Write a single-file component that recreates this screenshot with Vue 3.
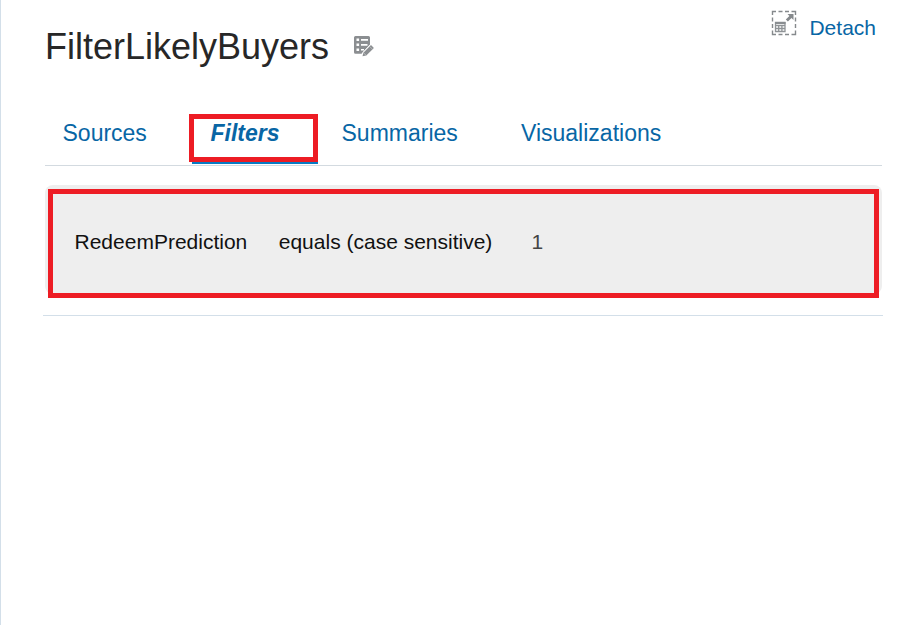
<script setup>
const tabs = [
  { label: 'Sources', cls: 'sources' },
  { label: 'Filters', cls: 'filters', active: true },
  { label: 'Summaries', cls: 'summaries' },
  { label: 'Visualizations', cls: 'visualizations' }
]
</script>

<template>
  <main class="page">
    <header class="header">
      <h1 class="title">FilterLikelyBuyers</h1>
      <svg class="edit-icon" width="21" height="22" viewBox="0 0 21 22">
        <path d="M1.500 1H14.500A1.500 1.500 0 0 1 16 2.500V9.500L7.500 18.700H1.500A1.500 1.500 0 0 1 0 17.200V2.500A1.500 1.500 0 0 1 1.500 1Z" fill="#8b8e91" />
        <path d="M2.500 3.500h2.600v2.400H2.500zM2.500 8.500h2.600v2.400H2.500zM2.500 13.500h2.600v2.400H2.500zM7 4h7v1.800H7zM7 9h6.500v1.700H7zM7 14h3v1.600H7z" fill="#fff" />
        <path d="M8.500 21.300 9.400 17.700 17 10.100 19.900 13 12.300 20.500Z" fill="#8b8e91" stroke="#fff" stroke-width="1.600" paint-order="stroke" />
        <path d="m15.600 11.400 2.900 2.900M9.400 17.700l2.900 2.800" stroke="#d4d6d7" stroke-width=".6" />
      </svg>
      <a class="detach">
        <svg class="detach-icon" width="26" height="26" viewBox="0 0 26 26">
          <path d="M1.500 5V1.500H5M7.500 1.500H11.500M14 1.500H18M20.500 1.500H24.500V5M24.500 7.500V11.500M24.500 14V18M24.500 20.500V24.500H20.500M18 24.500H14M11.500 24.500H7.500M5 24.500H1.500V20.500M1.500 18V14M1.500 11.500V7.500" fill="none" stroke="#85898c" stroke-width="1.400" />
          <path d="M4.500 12.500h9.500v9h-9.500zM4.500 15.500h9.500M7.700 15.500v6M10.900 15.500v6M4.500 18.500h9.500" fill="none" stroke="#8f9396" stroke-width="1.300" />
          <path d="M4 12h10.500v2H4z" fill="#898d90" />
          <path d="M16.500 4h6v6l-2-2-3.600 3.600-2.100-2.100 3.600-3.600z" fill="#85898c" />
        </svg>
        <span>Detach</span>
      </a>
    </header>

    <nav class="tabs">
      <a v-for="tab in tabs" :key="tab.label" class="tab" :class="[tab.cls, { active: tab.active }]">
        {{ tab.label }}
        <i v-if="tab.active" class="tab-highlight"></i>
      </a>
    </nav>

    <section class="filter-list">
      <div class="filter-row">
        <span class="column">RedeemPrediction</span>
        <span class="operator">equals (case sensitive)</span>
        <span class="value">1</span>
        <i class="row-highlight"></i>
      </div>
    </section>
  </main>
</template>

<style>
body { background: #fff; }
</style>

<style scoped>
.page {
  box-sizing: border-box;
  height: 625px;
  border-left: 1px solid #d3dfe9;
  padding: 0 20px 0 42px;
  font-family: "Liberation Sans", Arial, sans-serif;
}
.header {
  display: flex;
  align-items: flex-start;
  height: 102px;
  padding-left: 2px;
}
.title {
  margin: 26px 0 0;
  font-size: 36px;
  line-height: 42px;
  font-weight: 400;
  color: #272727;
}
.edit-icon { margin: 35px 0 0 25px; }
.detach {
  display: flex;
  align-items: flex-start;
  margin: 10px 7px 0 auto;
  gap: 12px;
  color: #0866a5;
  font-size: 21px;
  line-height: 24px;
}
.detach span { margin-top: 6px; }
.tabs {
  box-sizing: border-box;
  display: flex;
  height: 64px;
  margin: 0 1px 0 2px;
  border-bottom: 1px solid #d3dae0;
}
.tab {
  box-sizing: border-box;
  height: 62px;
  padding-top: 18px;
  font-size: 23px;
  line-height: 26px;
  color: #0866a5;
  white-space: nowrap;
}
.sources { width: 147px; padding-left: 17.500px; }
.summaries { width: 179px; padding-left: 23.500px; }
.visualizations { padding-left: 24px; }
.filters { width: 126px; padding-left: 18.500px; }
.active {
  position: relative;
  border-bottom: 4px solid #087bc4;
  font-weight: 700;
  font-style: italic;
}
.tab-highlight {
  position: absolute;
  box-sizing: border-box;
  left: -3px;
  top: 12px;
  width: 129px;
  height: 48px;
  border: 5px solid #ed1c24;
}
.filter-list {
  box-sizing: border-box;
  height: 150px;
  padding: 19px 1px 0 2px;
  border-bottom: 1px solid #d3dfe9;
}
.filter-row {
  position: relative;
  display: flex;
  align-items: center;
  height: 109px;
  padding: 4px 0 0 29.500px;
  box-sizing: border-box;
  border-radius: 8px;
  background: #eee;
  color: #111;
  font-size: 21px;
  line-height: 24px;
}
.operator { margin-left: 31.500px; }
.value { margin-left: 39px; color: #444; }
.row-highlight {
  position: absolute;
  box-sizing: border-box;
  left: 3px;
  right: 3px;
  top: 4px;
  height: 109px;
  border: 5px solid #ed1c24;
}
</style>
